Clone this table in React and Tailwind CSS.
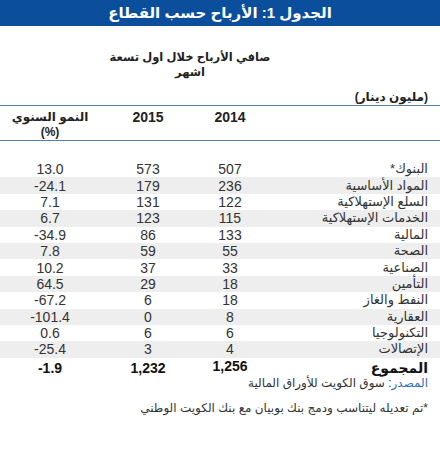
import React from "react";

const rows = [
  ["البنوك*", "507", "573", "13.0"],
  ["المواد الأساسية", "236", "179", "-24.1"],
  ["السلع الإستهلاكية", "122", "131", "7.1"],
  ["الخدمات الإستهلاكية", "115", "123", "6.7"],
  ["المالية", "133", "86", "-34.9"],
  ["الصحة", "55", "59", "7.8"],
  ["الصناعية", "33", "37", "10.2"],
  ["التأمين", "18", "29", "64.5"],
  ["النفط والغاز", "18", "6", "-67.2"],
  ["العقارية", "8", "0", "-101.4"],
  ["التكنولوجيا", "6", "6", "0.6"],
  ["الإتصالات", "4", "3", "-25.4"],
];

const font = { fontFamily: '"Liberation Sans", "DejaVu Sans", Arial, sans-serif' };

const App = () => {
  return (
    <div className="w-[440px] h-[450px] bg-white text-[#333]" style={font}>
      {/* Title bar */}
      <div className="h-[26px] bg-[#0b4f9c] flex items-center justify-center">
        <h1 dir="rtl" className="text-white font-bold text-[15px]">
          الجدول 1: الأرباح حسب القطاع
        </h1>
      </div>

      {/* Column group header */}
      <div className="grid grid-cols-[100px_180px_1fr] pt-[24px]">
        <div></div>
        <div dir="rtl" className="text-center font-bold text-[11.5px] leading-[15px] text-[#222] whitespace-nowrap">
          صافي الأرباح خلال اول تسعة
          <br />
          اشهر
        </div>
        <div></div>
      </div>
      <div dir="rtl" className="pr-[12px] mt-[10px] font-bold text-[12px] text-[#222] leading-[15px]">
        (مليون دينار)
      </div>
      <div className="h-px bg-[#5a7fa6]"></div>

      {/* Years */}
      <div className="grid grid-cols-[100px_96px_68px_1fr] pt-[4px]">
        <div dir="rtl" className="text-center font-bold text-[12px] leading-[15px] text-[#222]">
          النمو السنوي
          <br />
          (%)
        </div>
        <div className="text-center font-bold text-[14px] leading-[15px] text-[#222]">2015</div>
        <div className="text-center font-bold text-[14px] leading-[15px] text-[#222]">2014</div>
        <div></div>
      </div>
      <div className="h-px bg-[#5a7fa6]"></div>

      {/* Rows */}
      <div className="mt-[20px]">
        {rows.map((r, i) => (
          <div
            key={i}
            className={`grid grid-cols-[100px_96px_68px_1fr] h-[16.4px] items-center leading-[16px] ${
              i % 2 === 1 ? "bg-[#eeeeee]" : ""
            }`}
          >
            <div className="text-center text-[14px]">{r[3]}</div>
            <div className="text-center text-[14px]">{r[2]}</div>
            <div className="text-center text-[14px]">{r[1]}</div>
            <div dir="rtl" className="pr-[12px] text-[13px]">{r[0]}</div>
          </div>
        ))}
        <div className="grid grid-cols-[100px_96px_68px_1fr] h-[17px] items-center text-[14px] font-bold text-[#111]">
          <div className="text-center">-1.9</div>
          <div className="text-center">1,232</div>
          <div className="text-center -mt-[4px]">1,256</div>
          <div dir="rtl" className="pr-[12px]">المجموع</div>
        </div>
      </div>

      <div dir="rtl" className="pr-[12px] text-[12px] leading-[16px] text-[#333]">
        <span className="text-[#2f6fb5]">المصدر</span>: سوق الكويت للأوراق المالية
      </div>
      <div dir="rtl" className="pr-[12px] text-[12px] leading-[16px] mt-[9px] text-[#333]">
        *تم تعديله ليتناسب ودمج بنك بوبيان مع بنك الكويت الوطني
      </div>
    </div>
  );
};

export default App;
